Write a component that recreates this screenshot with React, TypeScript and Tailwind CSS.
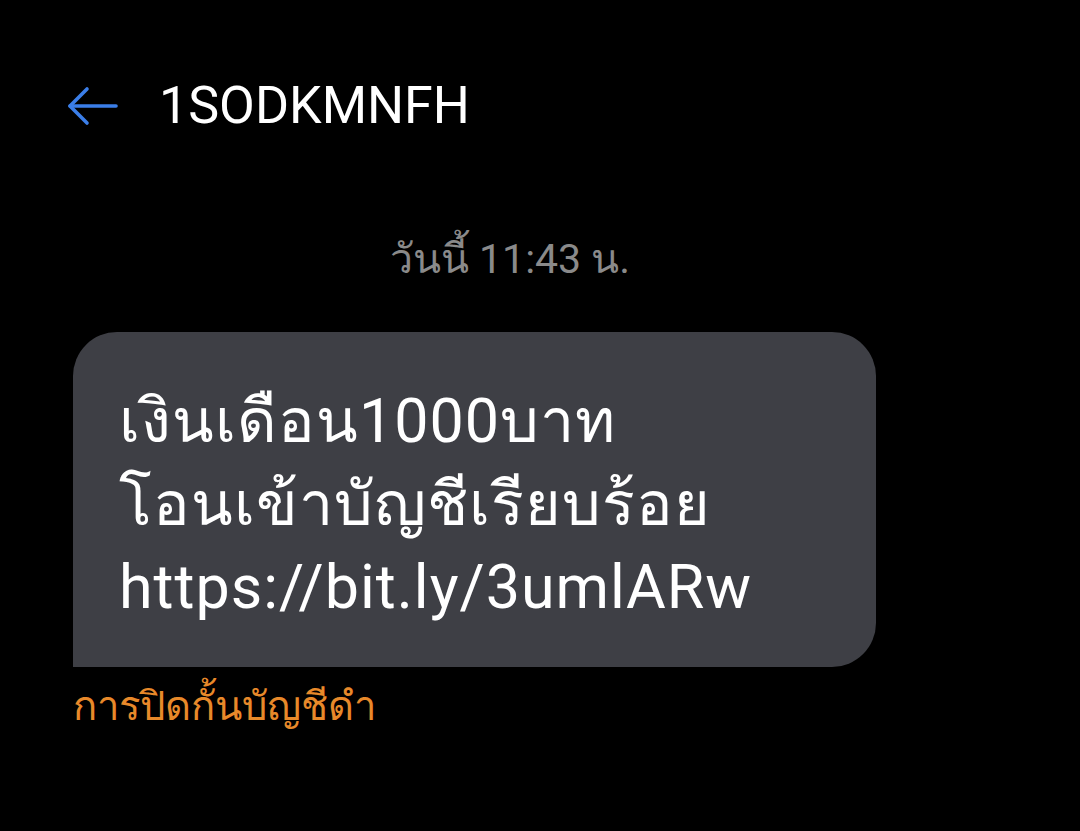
function BackArrow() {
  return (
    <svg width="52" height="40" viewBox="0 0 52 40" fill="none" stroke="#3b7ee8" strokeWidth="3.6" strokeLinecap="round" strokeLinejoin="round">
      <path d="M3 20H49" />
      <path d="M20 3L3 20L20 37" />
    </svg>
  );
}

function App() {
  return (
    <div className="w-[1080px] h-[831px] bg-black overflow-hidden font-['Roboto','Noto_Sans',sans-serif]">
      <div className="h-[212px] flex items-start pt-[78px] pl-[67px]">
        <div className="mt-[8px]">
          <BackArrow />
        </div>
        <span className="ml-[40px] text-[52px] leading-[56px] text-white">1SODKMNFH</span>
      </div>

      <div className="flex justify-center pr-[60px] pt-[22px]">
        <span className="text-[41px] leading-[50px] text-[#8a8a8a]">วันนี้ 11:43 น.</span>
      </div>

      <div className="pl-[73px] mt-[48px]">
        <div className="w-[803px] h-[335px] bg-[#3e3f45] rounded-[44px] rounded-bl-none pl-[46px] pt-[48px]">
          <p className="text-[61px] leading-[83px] tracking-[1px] text-white">
            เงินเดือน1000บาท
            <br />
            โอนเข้าบัญชีเรียบร้อย
            <br />
            https://bit.ly/3umlARw
          </p>
        </div>
        <p className="mt-[14px] text-[40px] leading-[52px] text-[#e8892a]">การปิดกั้นบัญชีดำ</p>
      </div>
    </div>
  );
}

export default App;
